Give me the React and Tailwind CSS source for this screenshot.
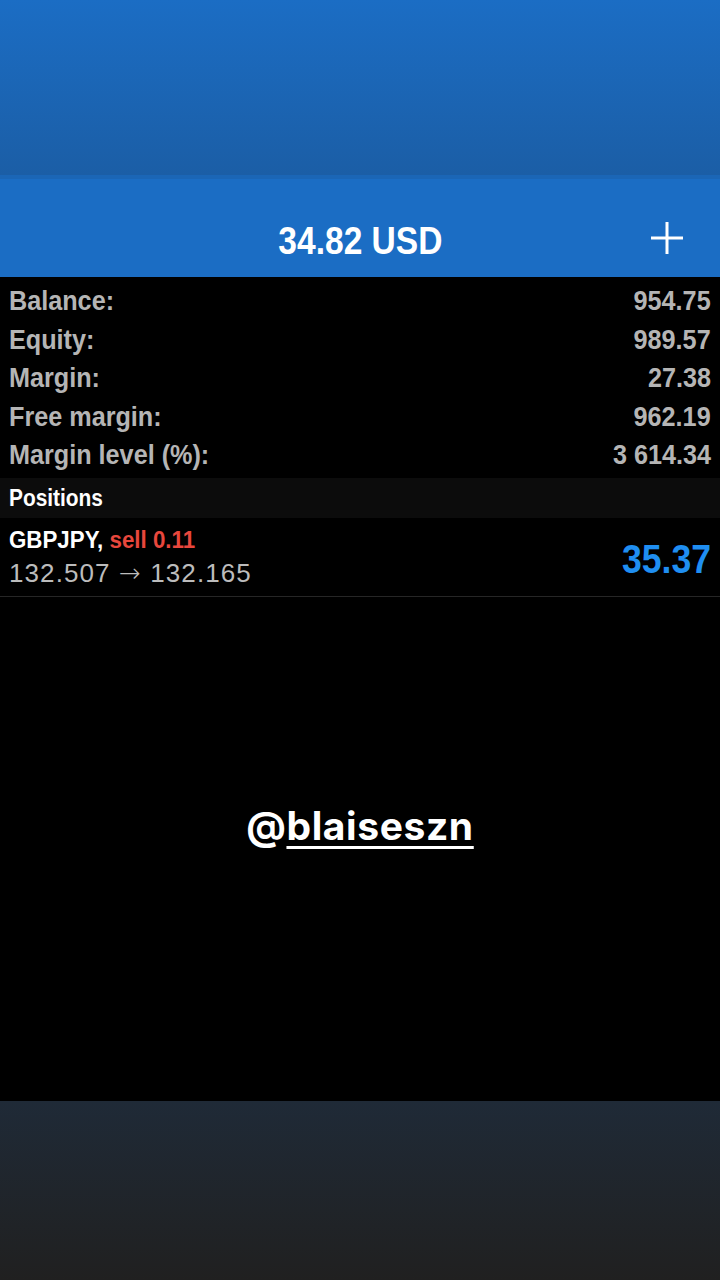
import React from "react";

const sans = { fontFamily: '"Liberation Sans", Arial, sans-serif' };

const stats = [
  ["Balance:", "954.75"],
  ["Equity:", "989.57"],
  ["Margin:", "27.38"],
  ["Free margin:", "962.19"],
  ["Margin level (%):", "3 614.34"],
];

// squeezed text, to get the condensed look of the app font
const Narrow = ({ children, className = "" }) => (
  <span className={"inline-block whitespace-nowrap " + className}>{children}</span>
);

export default function App() {
  return (
    <div className="w-[720px] h-[1280px] bg-black flex flex-col overflow-hidden" style={sans}>
      <div className="h-[179px] bg-gradient-to-b from-[#1b6dc4] to-[#1b5ea6] border-b-4 border-[#1b66b6]" />
      <div className="h-[98px] bg-[#1b6dc4] relative flex items-center justify-center pt-[24px]">
        <Narrow className="text-white font-bold text-[39px] leading-none scale-x-[0.86] origin-center">
          34.82 USD
        </Narrow>
        <svg className="absolute right-[37px] top-[43px]" width="32" height="32" viewBox="0 0 32 32">
          <path d="M16 0v32M0 16h32" stroke="white" strokeWidth="3" />
        </svg>
      </div>
      <div className="h-[201px] flex flex-col pt-[5px] px-[9px]">
        {stats.map(([k, v]) => (
          <div key={k} className="h-[38.5px] flex items-center justify-between text-[#b5b5b5] font-bold text-[28px]">
            <Narrow className="scale-x-[0.9] origin-left">{k}</Narrow>
            <Narrow className="scale-x-[0.9] origin-right">{v}</Narrow>
          </div>
        ))}
      </div>
      <div className="h-[40px] bg-[#0c0c0c] flex items-center px-[9px] text-white font-bold text-[24px]">
        <Narrow className="scale-x-[0.87] origin-left">Positions</Narrow>
      </div>
      <div className="h-[79px] flex items-center justify-between px-[9px] border-b border-[#262626]">
        <div className="flex flex-col">
          <div className="font-bold text-[24px] leading-[32px] text-white">
            <Narrow className="scale-x-[0.93] origin-left">
              GBPJPY, <span className="text-[#e8473d]">sell 0.11</span>
            </Narrow>
          </div>
          <div className="text-[26px] leading-[34px] text-[#bcbcbc] tracking-[1.1px]">
            132.507 <span style={{ fontFamily: '"DejaVu Sans", sans-serif' }} className="font-light">→</span> 132.165
          </div>
        </div>
        <Narrow className="text-[#1f8ef1] font-bold text-[40px] scale-x-[0.89] origin-right mt-[4px]">
          35.37
        </Narrow>
      </div>
      <div className="flex-1 flex items-center justify-center">
        <span className="text-white font-bold text-[39px] tracking-[0.6px] mt-[-46px]" style={{ fontFamily: "Inter, sans-serif" }}>
          @<span className="underline decoration-[3px] underline-offset-[6px]">blaiseszn</span>
        </span>
      </div>
      <div className="h-[179px] bg-gradient-to-b from-[#1f2a37] to-[#202020]" />
    </div>
  );
}
